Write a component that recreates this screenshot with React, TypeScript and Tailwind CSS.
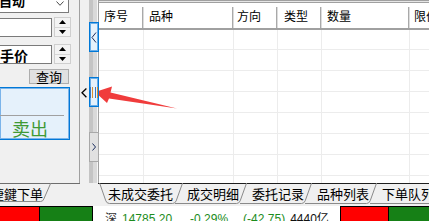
import React from "react";

const COLS = [
  { label: "序号", w: "w-[45px]", pl: "pl-[5px]" },
  { label: "品种", w: "w-[90px]", pl: "pl-[5px]" },
  { label: "方向", w: "w-[44px]", pl: "pl-[3px]" },
  { label: "类型", w: "w-[44px]", pl: "pl-[6px]" },
  { label: "数量", w: "w-[88px]", pl: "pl-[5px]" },
  { label: "限价", w: "w-[70px]", pl: "pl-[4px]" },
];

const ROWS = ["h-[20px]", "h-[21px]", "h-[21px]", "h-[21px]", "h-[21px]", "h-[21px]", "h-[21px]", "h-[21px]"];

const TABS = ["成交明细", "委托记录", "品种列表", "下单队列"];

function Spinner() {
  return (
    <div className="ml-[2px] w-[17px] h-[20px] shrink-0 flex flex-col border border-[#cfcfcf] bg-[#f3f3f3]">
      <div className="flex-1 flex items-center justify-center border-b border-[#d6d6d6]">
        <svg width="7" height="4" viewBox="0 0 7 4">
          <path d="M0 4 L3.5 0 L7 4Z" fill="#000" />
        </svg>
      </div>
      <div className="flex-1 flex items-center justify-center">
        <svg width="7" height="4" viewBox="0 0 7 4">
          <path d="M0 0 L3.5 4 L7 0Z" fill="#000" />
        </svg>
      </div>
    </div>
  );
}

export default function App() {
  return (
    <div className="relative w-[429px] h-[221px] overflow-hidden bg-[#f0f0f0] text-black font-['Noto_Sans_CJK_SC',sans-serif]">
      <div className="flex h-[206px]">
        {/* Left panel */}
        <div className="w-[80px] shrink-0 flex flex-col">
          <div className="h-[183px] shrink-0 border-r border-[#a0a0a0] flex flex-col overflow-hidden">
            {/* dropdown */}
            <div className="mt-[-9px] ml-[-1px] w-[70px] h-[22px] shrink-0 border border-[#7a7a7a] bg-white flex">
              <span className="self-start mt-[2px] ml-[-1px] text-[13px] leading-[13px] font-bold">自动</span>
              <svg className="self-start mt-[9px] ml-auto mr-[4px]" width="8" height="5" viewBox="0 0 8 5">
                <path d="M0.5 0.5 L4 4.3 L7.5 0.5" stroke="#4a4a4a" strokeWidth="1" fill="none" />
              </svg>
            </div>
            {/* row 1 */}
            <div className="mt-[4px] flex h-[20px] shrink-0">
              <div className="mt-[1px] ml-[-1px] w-[53px] h-[19px] border border-[#7a7a7a] bg-white" />
              <Spinner />
            </div>
            {/* row 2 */}
            <div className="mt-[7px] flex h-[20px] shrink-0">
              <div className="mt-[1px] ml-[-1px] w-[53px] h-[19px] border border-[#7a7a7a] bg-white flex items-center">
                <span className="text-[14px] leading-[14px] font-bold">手价</span>
              </div>
              <Spinner />
            </div>
            {/* query button */}
            <div className="mt-[5px] ml-[29px] w-[40px] h-[15px] shrink-0 border border-[#adadad] bg-[#e1e1e1] flex items-center justify-center text-[13px] leading-[13px]">
              查询
            </div>
            {/* sell panel */}
            <div className="mt-[3px] ml-[-1px] w-[71px] h-[53px] shrink-0 border border-[#0078d7] shadow-[inset_0_0_0_1px_#7ab4ea] bg-[#e5f1fb] flex flex-col">
              <div className="h-[27px] shrink-0" />
              <div className="h-px mr-[5px] bg-[#a0a0a0] shrink-0" />
              <div className="flex-1 flex items-center pl-[12px]">
                <span className="text-[18px] leading-[18px] text-[#3f9a35]">卖出</span>
              </div>
            </div>
          </div>
          {/* left tab bar */}
          <div className="h-[23px] shrink-0 border-t border-[#6e6e6e] flex">
            <div className="relative w-[52px] shrink-0 pt-[3px] text-[13px] leading-[13px] whitespace-nowrap">
              <svg className="absolute left-0 top-0 overflow-visible" width="52" height="22">
                <path d="M-2,17.5 L40.5,17.5 Q43,17.5 43.8,15 L50.8,-1" stroke="#8a8a8a" fill="none" />
              </svg>
              <span className="relative ml-[-22px]">快捷鍵下单</span>
            </div>
          </div>
        </div>

        {/* Splitter */}
        <div className="w-[18px] shrink-0 h-[183px] flex">
          <div className="w-[9px] shrink-0 flex flex-col">
            <svg className="mt-[88px] ml-[1px]" width="6" height="10" viewBox="0 0 6 10">
              <path d="M5.4 0.5 L1 4.8 L5.4 9.2" stroke="#000" strokeWidth="1.3" fill="none" />
            </svg>
          </div>
          <div className="w-[9px] shrink-0 flex flex-col bg-[linear-gradient(to_right,#c4c4c4_0px,#c4c4c4_4px,#d9d9d9_4px,#d9d9d9_8px,#f6f6f6_8px)]">
            <div className="relative z-10 mt-[22px] w-[10px] h-[30px] shrink-0 border border-[#0078d7] shadow-[inset_0_0_0_1px_#6aaee8] bg-[#e5f1fb] flex items-center justify-center">
              <svg width="6" height="11" viewBox="0 0 6 11">
                <path d="M5 0.5 L1 5.5 L5 10.5" stroke="#1b2d5e" strokeWidth="1" fill="none" />
              </svg>
            </div>
            <div className="relative z-10 mt-[25px] w-[10px] h-[30px] shrink-0 border border-[#0078d7] shadow-[inset_0_0_0_1px_#6aaee8] bg-[#e5f1fb] flex items-center justify-center gap-[1px]">
              <div className="w-px h-[11px] bg-[#3a78c2]" />
              <div className="w-px h-[11px] bg-[#d9902f]" />
              <div className="w-px h-[11px]" />
              <div className="w-px h-[11px] bg-[#3a78c2]" />
              <div className="w-px h-[11px] bg-[#d9902f]" />
            </div>
            <div className="relative z-10 mt-[25px] w-[10px] h-[30px] shrink-0 border border-[#a8a8a8] bg-[#e1e1e1] flex items-center justify-center">
              <svg width="4" height="8" viewBox="0 0 4 8">
                <path d="M0.5 0.5 L3.5 4 L0.5 7.5" stroke="#1b2d5e" strokeWidth="1" fill="none" />
              </svg>
            </div>
          </div>
        </div>

        {/* Right panel */}
        <div className="flex-1 min-w-0 flex flex-col">
          <div className="h-[183px] shrink-0 border-l border-[#a0a0a0] bg-white flex flex-col overflow-hidden">
            <div className="h-[3px] shrink-0 border-t border-b border-[#a0a0a0] bg-[#e6e6e6]" />
            <div className="flex h-[27px] shrink-0 border-b-2 border-[#a0a0a0]">
              {COLS.map((c) => (
                <div key={c.label} className={`flex shrink-0 ${c.w}`}>
                  <div className={`flex-1 flex items-center text-[12px] leading-[12px] whitespace-nowrap ${c.pl}`}>{c.label}</div>
                  <div className="self-end flex h-[21px]">
                    <div className="w-px bg-[#a9a9a9]" />
                    <div className="w-px bg-[#dcdcdc]" />
                  </div>
                </div>
              ))}
            </div>
            {ROWS.map((h, i) => (
              <div key={i} className={`flex shrink-0 border-b border-[#ececec] ${h}`}>
                {COLS.map((c) => (
                  <div key={c.label} className={`shrink-0 border-r border-[#ececec] ${c.w}`} />
                ))}
              </div>
            ))}
          </div>
          {/* right tab bar */}
          <div className="h-[23px] shrink-0 border-t border-[#1e1e1e] flex text-[13px] leading-[13px] whitespace-nowrap">
            <div className="relative w-[85px] shrink-0 pl-[10px] pt-[3px]">
              <svg className="absolute left-0 top-0 overflow-visible" width="85" height="22">
                <path d="M1.6,-1 L7.8,16.8 Q8.8,19.5 11.5,19.5 L74.5,19.5 Q77.2,19.5 78.2,16.8 L84.6,-1" stroke="#8a8a8a" fill="none" />
              </svg>
              <span className="relative">未成交委托</span>
            </div>
            {TABS.map((t) => (
              <div key={t} className="relative w-[65px] shrink-0 pl-[4px] pt-[3px]">
                <svg className="absolute left-0 top-0 overflow-visible" width="65" height="22">
                  <path d="M-8,19.5 L53.5,19.5 Q56.2,19.5 57.2,16.8 L63.6,-1" stroke="#8a8a8a" fill="none" />
                </svg>
                <span className="relative">{t}</span>
              </div>
            ))}
          </div>
        </div>
      </div>

      {/* Status bar */}
      <div className="h-[15px] bg-white flex items-start overflow-hidden">
        <div className="ml-[-1px] flex h-[17px] shrink-0 border border-black">
          <div className="w-[40px] bg-[#ff0000] border-r border-black" />
          <div className="w-[52px] bg-[#168016]" />
        </div>
        <div className="mt-[6px] ml-[12px] flex items-baseline text-[12px] leading-[12px] whitespace-nowrap font-['Liberation_Sans',sans-serif]">
          <span className="text-[#333] font-['Noto_Sans_CJK_SC',sans-serif]">深</span>
          <span className="ml-[5px] text-[#1c8c1c]">14785.20</span>
          <span className="ml-[18px] text-[#1c8c1c]">-0.29%</span>
          <span className="ml-[15px] text-[#1c8c1c]">(-42.75)</span>
          <span className="ml-[5px] text-[#111]">
            4440<span className="font-['Noto_Sans_CJK_SC',sans-serif]">亿</span>
          </span>
        </div>
        <div className="ml-auto mr-[-2px] flex h-[17px] shrink-0 border border-black">
          <div className="w-[48px] bg-[#ff0000] border-r border-black" />
          <div className="w-[41px] bg-[#168016]" />
        </div>
      </div>

      {/* Red annotation arrow */}
      <svg className="absolute left-0 top-0 pointer-events-none" width="429" height="221" viewBox="0 0 429 221">
        <polygon points="95,92 112,86.5 110.5,92.5 177,108.5 109,98.5 107,103" fill="#f03c3c" />
      </svg>
    </div>
  );
}
